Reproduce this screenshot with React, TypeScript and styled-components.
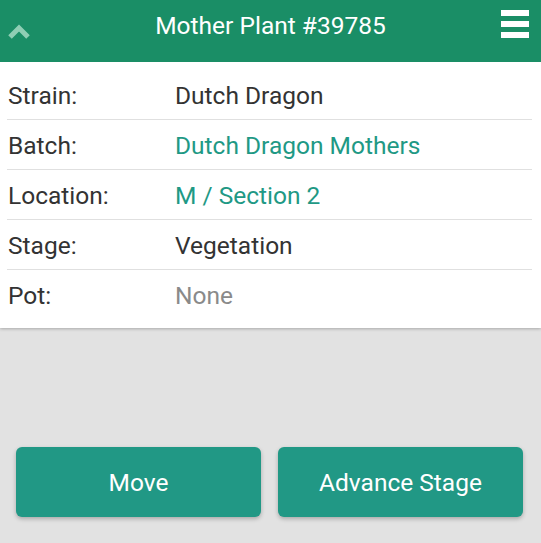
import styled, { createGlobalStyle } from "styled-components"

const GlobalStyle = createGlobalStyle`
  html, body {
    margin: 0;
    padding: 0;
    background: #e2e2e2;
    font-family: Roboto, "Liberation Sans", sans-serif;
  }
`

type Row = { label: string; value: string; tone?: "link" | "muted" }

const rows: Row[] = [
  { label: "Strain:", value: "Dutch Dragon" },
  { label: "Batch:", value: "Dutch Dragon Mothers", tone: "link" },
  { label: "Location:", value: "M / Section 2", tone: "link" },
  { label: "Stage:", value: "Vegetation" },
  { label: "Pot:", value: "None", tone: "muted" },
]

export default function App() {
  return (
    <Page>
      <GlobalStyle />
      <Header>
        <Chevron viewBox="0 0 24 18">
          <polyline points="3,14 12,5 21,14" fill="none" stroke="#8fceb4" strokeWidth="5" />
        </Chevron>
        <Title>Mother Plant #39785</Title>
        <Burger>
          <span />
          <span />
          <span />
        </Burger>
      </Header>

      <Card>
        {rows.map((r) => (
          <InfoRow key={r.label}>
            <Label>{r.label}</Label>
            <Value $tone={r.tone}>{r.value}</Value>
          </InfoRow>
        ))}
      </Card>

      <Actions>
        <ActionButton type="button">Move</ActionButton>
        <ActionButton type="button">Advance Stage</ActionButton>
      </Actions>
    </Page>
  )
}

const Page = styled.div`
  display: flex;
  flex-direction: column;
  min-height: 100vh;
`

const Header = styled.header`
  height: 62px;
  background: #1a8e66;
  display: flex;
  align-items: center;
  justify-content: space-between;
  padding: 0 12px 0 7px;
  position: relative;
`

const Chevron = styled.svg`
  width: 24px;
  height: 18px;
  margin-top: 2px;
`

const Title = styled.h1`
  margin: 0;
  font-size: 24.5px;
  line-height: 28px;
  font-weight: 400;
  color: #fff;
  position: absolute;
  left: 0;
  right: 0;
  text-align: center;
  top: 12px;
  pointer-events: none;
`

const Burger = styled.div`
  display: flex;
  flex-direction: column;
  gap: 5px;
  width: 28px;
  margin-top: -14px;
  span {
    display: block;
    height: 6px;
    background: #fff;
  }
`

const Card = styled.section`
  background: #fff;
  padding: 8px 9px 8px 7px;
  box-shadow: 0 1px 3px rgba(0, 0, 0, 0.25);
`

const InfoRow = styled.div`
  display: flex;
  align-items: center;
  height: 50px;
  box-sizing: border-box;
  border-bottom: 1px solid #e0e0e0;
  padding: 1px 0 0 1px;
  &:last-child {
    border-bottom: none;
  }
`

const Label = styled.span`
  width: 167px;
  font-size: 24.5px;
  color: #333;
`

const Value = styled.span<{ $tone?: "link" | "muted" }>`
  font-size: 24.5px;
  color: ${(p) => (p.$tone === "link" ? "#1f9985" : p.$tone === "muted" ? "#8a8a8a" : "#333")};
`

const Actions = styled.div`
  margin-top: auto;
  display: flex;
  gap: 17px;
  padding: 0 18px 26px 16px;
`

const ActionButton = styled.button`
  flex: 1;
  height: 70px;
  border: none;
  border-radius: 6px;
  background: #219885;
  color: #fff;
  font-family: Roboto, "Liberation Sans", sans-serif;
  font-size: 24.5px;
  box-shadow: 0 2px 4px rgba(0, 0, 0, 0.25);
  cursor: pointer;
`
